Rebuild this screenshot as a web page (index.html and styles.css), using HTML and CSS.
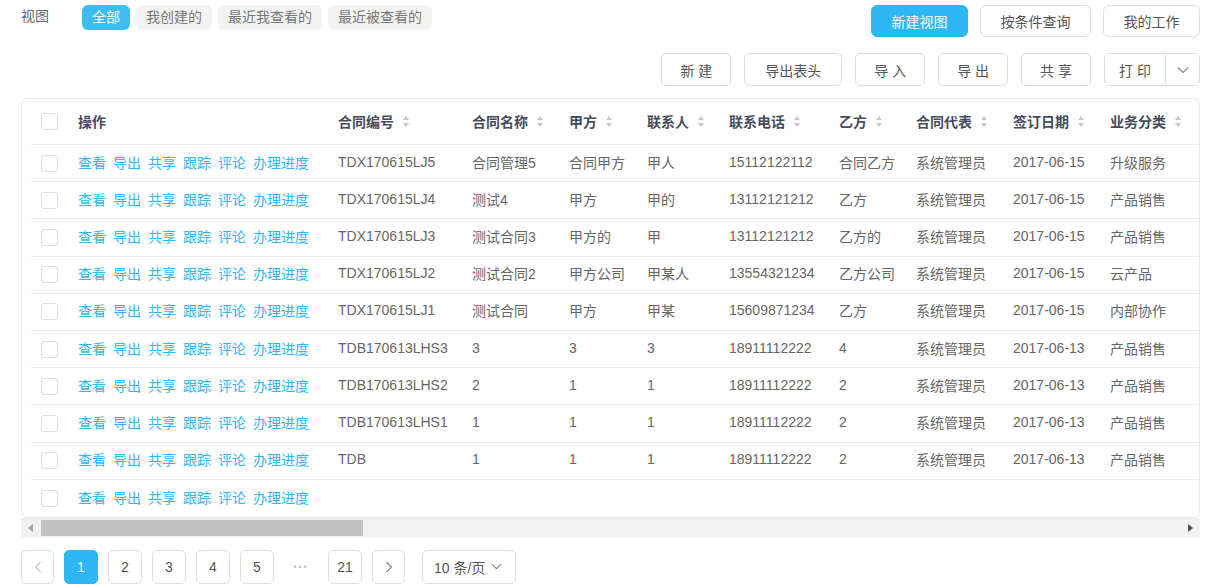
FILE: index.html
```html
<!DOCTYPE html>
<html lang="zh-CN">
<head>
<meta charset="utf-8">
<title>合同管理</title>
<link rel="stylesheet" href="styles.css">
</head>
<body>
<div class="page">
  <div class="topbar">
    <div class="views">
      <span class="views-label">视图</span>
      <div class="tabs">
        <span class="tab active">全部</span>
        <span class="tab">我创建的</span>
        <span class="tab">最近我查看的</span>
        <span class="tab">最近被查看的</span>
      </div>
    </div>
    <div class="top-actions">
      <button class="btn btn-primary">新建视图</button>
      <button class="btn">按条件查询</button>
      <button class="btn">我的工作</button>
    </div>
  </div>

  <div class="toolbar">
    <button class="btn tbtn">新 建</button>
    <button class="btn tbtn wide">导出表头</button>
    <button class="btn tbtn">导 入</button>
    <button class="btn tbtn">导 出</button>
    <button class="btn tbtn">共 享</button>
    <div class="split">
      <button class="split-main">打 印</button>
      <button class="split-arrow"><svg width="12" height="8" viewBox="0 0 12 8"><path d="M1 1.5 L6 6.5 L11 1.5" fill="none" stroke="#80848f" stroke-width="1.1"/></svg></button>
    </div>
  </div>

  <div class="table-wrap">
    <div class="table">
      <div class="row head">
        <div class="cell chk"><span class="cb"></span></div>
        <div class="cell">操作</div>
        <div class="cell">合同编号<i class="sort"></i></div>
        <div class="cell">合同名称<i class="sort"></i></div>
        <div class="cell">甲方<i class="sort"></i></div>
        <div class="cell">联系人<i class="sort"></i></div>
        <div class="cell">联系电话<i class="sort"></i></div>
        <div class="cell">乙方<i class="sort"></i></div>
        <div class="cell">合同代表<i class="sort"></i></div>
        <div class="cell">签订日期<i class="sort"></i></div>
        <div class="cell">业务分类<i class="sort"></i></div>
      </div>

      <div class="row">
        <div class="cell chk"><span class="cb"></span></div>
        <div class="cell ops"><a>查看</a><a>导出</a><a>共享</a><a>跟踪</a><a>评论</a><a>办理进度</a></div>
        <div class="cell">TDX170615LJ5</div><div class="cell">合同管理5</div><div class="cell">合同甲方</div><div class="cell">甲人</div><div class="cell">15112122112</div><div class="cell">合同乙方</div><div class="cell">系统管理员</div><div class="cell">2017-06-15</div><div class="cell">升级服务</div>
      </div>
      <div class="row">
        <div class="cell chk"><span class="cb"></span></div>
        <div class="cell ops"><a>查看</a><a>导出</a><a>共享</a><a>跟踪</a><a>评论</a><a>办理进度</a></div>
        <div class="cell">TDX170615LJ4</div><div class="cell">测试4</div><div class="cell">甲方</div><div class="cell">甲的</div><div class="cell">13112121212</div><div class="cell">乙方</div><div class="cell">系统管理员</div><div class="cell">2017-06-15</div><div class="cell">产品销售</div>
      </div>
      <div class="row">
        <div class="cell chk"><span class="cb"></span></div>
        <div class="cell ops"><a>查看</a><a>导出</a><a>共享</a><a>跟踪</a><a>评论</a><a>办理进度</a></div>
        <div class="cell">TDX170615LJ3</div><div class="cell">测试合同3</div><div class="cell">甲方的</div><div class="cell">甲</div><div class="cell">13112121212</div><div class="cell">乙方的</div><div class="cell">系统管理员</div><div class="cell">2017-06-15</div><div class="cell">产品销售</div>
      </div>
      <div class="row">
        <div class="cell chk"><span class="cb"></span></div>
        <div class="cell ops"><a>查看</a><a>导出</a><a>共享</a><a>跟踪</a><a>评论</a><a>办理进度</a></div>
        <div class="cell">TDX170615LJ2</div><div class="cell">测试合同2</div><div class="cell">甲方公司</div><div class="cell">甲某人</div><div class="cell">13554321234</div><div class="cell">乙方公司</div><div class="cell">系统管理员</div><div class="cell">2017-06-15</div><div class="cell">云产品</div>
      </div>
      <div class="row">
        <div class="cell chk"><span class="cb"></span></div>
        <div class="cell ops"><a>查看</a><a>导出</a><a>共享</a><a>跟踪</a><a>评论</a><a>办理进度</a></div>
        <div class="cell">TDX170615LJ1</div><div class="cell">测试合同</div><div class="cell">甲方</div><div class="cell">甲某</div><div class="cell">15609871234</div><div class="cell">乙方</div><div class="cell">系统管理员</div><div class="cell">2017-06-15</div><div class="cell">内部协作</div>
      </div>
      <div class="row">
        <div class="cell chk"><span class="cb"></span></div>
        <div class="cell ops"><a>查看</a><a>导出</a><a>共享</a><a>跟踪</a><a>评论</a><a>办理进度</a></div>
        <div class="cell">TDB170613LHS3</div><div class="cell">3</div><div class="cell">3</div><div class="cell">3</div><div class="cell">18911112222</div><div class="cell">4</div><div class="cell">系统管理员</div><div class="cell">2017-06-13</div><div class="cell">产品销售</div>
      </div>
      <div class="row">
        <div class="cell chk"><span class="cb"></span></div>
        <div class="cell ops"><a>查看</a><a>导出</a><a>共享</a><a>跟踪</a><a>评论</a><a>办理进度</a></div>
        <div class="cell">TDB170613LHS2</div><div class="cell">2</div><div class="cell">1</div><div class="cell">1</div><div class="cell">18911112222</div><div class="cell">2</div><div class="cell">系统管理员</div><div class="cell">2017-06-13</div><div class="cell">产品销售</div>
      </div>
      <div class="row">
        <div class="cell chk"><span class="cb"></span></div>
        <div class="cell ops"><a>查看</a><a>导出</a><a>共享</a><a>跟踪</a><a>评论</a><a>办理进度</a></div>
        <div class="cell">TDB170613LHS1</div><div class="cell">1</div><div class="cell">1</div><div class="cell">1</div><div class="cell">18911112222</div><div class="cell">2</div><div class="cell">系统管理员</div><div class="cell">2017-06-13</div><div class="cell">产品销售</div>
      </div>
      <div class="row">
        <div class="cell chk"><span class="cb"></span></div>
        <div class="cell ops"><a>查看</a><a>导出</a><a>共享</a><a>跟踪</a><a>评论</a><a>办理进度</a></div>
        <div class="cell">TDB</div><div class="cell">1</div><div class="cell">1</div><div class="cell">1</div><div class="cell">18911112222</div><div class="cell">2</div><div class="cell">系统管理员</div><div class="cell">2017-06-13</div><div class="cell">产品销售</div>
      </div>
      <div class="row last">
        <div class="cell chk"><span class="cb"></span></div>
        <div class="cell ops"><a>查看</a><a>导出</a><a>共享</a><a>跟踪</a><a>评论</a><a>办理进度</a></div>
        <div class="cell"></div><div class="cell"></div><div class="cell"></div><div class="cell"></div><div class="cell"></div><div class="cell"></div><div class="cell"></div><div class="cell"></div><div class="cell"></div>
      </div>
    </div>
  </div>

  <div class="hscroll">
    <span class="arrow-left"></span>
    <span class="thumb"></span>
    <span class="arrow-right"></span>
  </div>

  <div class="pager">
    <span class="pg pg-nav"><svg width="8" height="12" viewBox="0 0 8 12"><path d="M6.5 1 L1.5 6 L6.5 11" fill="none" stroke="#c5c8ce" stroke-width="1.1"/></svg></span>
    <span class="pg current">1</span>
    <span class="pg">2</span>
    <span class="pg">3</span>
    <span class="pg">4</span>
    <span class="pg">5</span>
    <span class="pg dots">•••</span>
    <span class="pg">21</span>
    <span class="pg pg-nav"><svg width="8" height="12" viewBox="0 0 8 12"><path d="M1.5 1 L6.5 6 L1.5 11" fill="none" stroke="#80848f" stroke-width="1.1"/></svg></span>
    <span class="size-select">10 条/页<svg width="11" height="7" viewBox="0 0 11 7"><path d="M1 1.2 L5.5 5.7 L10 1.2" fill="none" stroke="#80848f" stroke-width="1.1"/></svg></span>
  </div>
</div>
</body>
</html>
```

FILE: styles.css
```css
* { box-sizing: border-box; }

html, body {
  margin: 0;
  padding: 0;
  background: #fff;
}

body {
  font-family: "Liberation Sans", "Noto Sans CJK SC", sans-serif;
  font-size: 14px;
  color: #666;
}

.page {
  padding: 5px 7px 0 21px;
}

.topbar {
  display: flex;
  justify-content: space-between;
  align-items: flex-start;
  height: 32px;
}

.views {
  display: flex;
  align-items: flex-start;
}

.views-label {
  margin-left: 0;
  width: 61px;
  line-height: 22px;
  color: #666;
}

.tabs {
  display: flex;
  gap: 6px;
}

.tab {
  height: 25px;
  line-height: 24px;
  padding: 0 10px;
  border-radius: 6px;
  background: #f3f3f3;
  color: #777;
}

.tab.active {
  background: #3dbdf2;
  color: #fff;
}

.top-actions {
  display: flex;
  gap: 12px;
}

.btn {
  font-family: inherit;
  font-size: 14px;
  height: 32px;
  padding: 0 19px;
  border: 1px solid #dcdee2;
  border-radius: 6px;
  background: #fff;
  color: #555;
  cursor: pointer;
}

.btn-primary {
  background: #2db7f5;
  border-color: #2db7f5;
  color: #fff;
}

.top-actions .btn {
  padding: 0 19.5px;
}

.toolbar {
  display: flex;
  justify-content: flex-end;
  gap: 13px;
  margin-top: 16px;
}

.tbtn {
  height: 33px;
  padding: 0 18px;
  border-radius: 5px;
}

.tbtn.wide {
  padding: 0 20px;
}

.split {
  display: flex;
  height: 33px;
  border: 1px solid #dcdee2;
  border-radius: 5px;
  overflow: hidden;
}

.split-main {
  font-family: inherit;
  font-size: 14px;
  color: #555;
  width: 61px;
  border: none;
  border-right: 1px solid #dcdee2;
  background: #fff;
}

.split-arrow {
  width: 33px;
  border: none;
  background: #fff;
  display: flex;
  align-items: center;
  justify-content: center;
}

.table-wrap {
  margin-top: 12px;
  border: 1px solid #e9eaec;
  border-radius: 6px;
  overflow: hidden;
  padding-left: 9px;
}

.table {
  width: 1189px;
}

.row {
  display: grid;
  grid-template-columns: 37px 260px 134px 97px 78px 82px 110px 77px 97px 97px 120px;
  height: 37.2px;
  align-items: center;
  border-bottom: 1px solid #e9eaec;
}

.row.head {
  height: 46px;
  font-weight: bold;
  color: #464c5b;
}

.row.head .cell {
  padding-bottom: 1px;
}

.row.last {
  border-bottom: none;
}

.cell {
  padding-left: 10px;
  padding-bottom: 3px;
  white-space: nowrap;
  display: flex;
  align-items: center;
}

.cell.chk,
.row.head .cell.chk {
  padding-bottom: 0;
}

.cb {
  display: inline-block;
  width: 17px;
  height: 17px;
  border: 1px solid #dddee1;
  border-radius: 3px;
  background: #fff;
}

.sort {
  display: inline-block;
  position: relative;
  width: 8px;
  height: 11px;
  margin-left: 8px;
}

.sort::before,
.sort::after {
  content: "";
  position: absolute;
  left: 1px;
  border-left: 3.5px solid transparent;
  border-right: 3.5px solid transparent;
}

.sort::before {
  top: 0;
  border-bottom: 4px solid #c5c8ce;
}

.sort::after {
  bottom: 0;
  border-top: 4px solid #c5c8ce;
}

.ops a {
  color: #2db7f5;
  margin-right: 7px;
  cursor: pointer;
}

.hscroll {
  display: flex;
  align-items: center;
  height: 20px;
  background: #f1f1f1;
  margin-top: 0;
}

.arrow-left {
  width: 0;
  height: 0;
  margin-left: 7px;
  border-top: 4px solid transparent;
  border-bottom: 4px solid transparent;
  border-right: 5px solid #a3a3a3;
}

.thumb {
  width: 322px;
  height: 16px;
  margin-left: 8px;
  background: #c1c1c1;
}

.arrow-right {
  width: 0;
  height: 0;
  margin-left: auto;
  margin-right: 7px;
  border-top: 4px solid transparent;
  border-bottom: 4px solid transparent;
  border-left: 5px solid #505050;
}

.pager {
  display: flex;
  align-items: center;
  gap: 10px;
  margin-top: 12px;
}

.pg {
  width: 34px;
  height: 34px;
  border: 1px solid #dddee1;
  border-radius: 5px;
  display: flex;
  align-items: center;
  justify-content: center;
  color: #555;
  font-size: 14px;
}

.pg-nav {
  width: 33px;
}

.pg.current {
  background: #2db7f5;
  border-color: #2db7f5;
  color: #fff;
}

.pg.dots {
  border: none;
  color: #bbbec4;
  font-size: 9px;
  letter-spacing: 2px;
}

.size-select {
  margin-left: 7px;
  width: 94px;
  height: 34px;
  border: 1px solid #dddee1;
  border-radius: 5px;
  display: flex;
  align-items: center;
  padding-left: 11px;
  gap: 6px;
  color: #555;
}
```
